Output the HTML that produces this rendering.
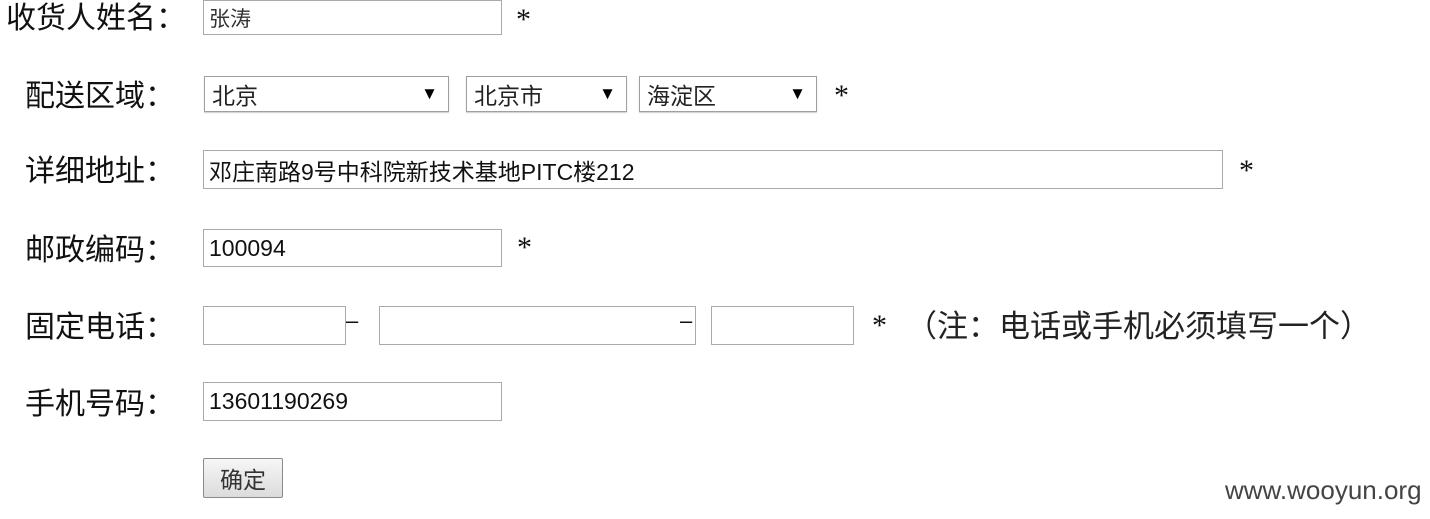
<!DOCTYPE html>
<html><head><meta charset="utf-8"><style>
body{margin:0;width:1430px;height:519px;background:#fff;position:relative;overflow:hidden;font-family:"Liberation Sans","Noto Sans CJK SC",sans-serif;color:#111}
.a{position:absolute;white-space:nowrap}
.lab{font-size:30px;line-height:36px}
.in{position:absolute;box-sizing:border-box;border:1px solid #aaa;background:#fff;font-size:23px;color:#111;padding-left:5px;display:flex;align-items:center}
.sel{position:absolute;box-sizing:border-box;border:1px solid #a0a0a0;box-shadow:0 1px 1px #ccc;background:#fff;font-size:23px;padding-left:7px;display:flex;align-items:center;color:#222}
.sel span.ar{position:absolute;right:10px;font-size:17px;color:#000}
.st{font-size:30px;line-height:36px;font-family:"Liberation Serif",serif}
</style></head><body>
<div class="a lab" style="left:6px;top:1px">收货人姓名：</div>
<div class="in" style="left:203px;top:0;width:299px;height:35px;color:#333;font-size:21px">张涛</div>
<div class="a st" style="left:516px;top:2px">*</div>

<div class="a lab" style="left:25px;top:79px">配送区域：</div>
<div class="sel" style="left:204px;top:76px;width:245px;height:36px">北京<span class="ar">▼</span></div>
<div class="sel" style="left:466px;top:76px;width:161px;height:36px">北京市<span class="ar">▼</span></div>
<div class="sel" style="left:639px;top:76px;width:178px;height:36px">海淀区<span class="ar">▼</span></div>
<div class="a st" style="left:834px;top:78px">*</div>

<div class="a lab" style="left:25px;top:154px">详细地址：</div>
<div class="in" style="left:203px;top:150px;width:1020px;height:39px">邓庄南路9号中科院新技术基地PITC楼212</div>
<div class="a st" style="left:1239px;top:153px">*</div>

<div class="a lab" style="left:25px;top:233px">邮政编码：</div>
<div class="in" style="left:203px;top:229px;width:299px;height:38px">100094</div>
<div class="a st" style="left:517px;top:230px">*</div>

<div class="a lab" style="left:25px;top:310px">固定电话：</div>
<div class="in" style="left:203px;top:306px;width:143px;height:39px"></div>
<div class="a" style="left:346px;top:306px;font-size:22px;line-height:30px">–</div>
<div class="in" style="left:379px;top:306px;width:317px;height:39px"></div>
<div class="a" style="left:680px;top:306px;font-size:22px;line-height:30px">–</div>
<div class="in" style="left:711px;top:306px;width:143px;height:39px"></div>
<div class="a st" style="left:872px;top:308px">*</div>
<div class="a" style="left:906px;top:309px;font-size:31px;line-height:36px;color:#222">（注：电话或手机必须填写一个）</div>

<div class="a lab" style="left:25px;top:387px">手机号码：</div>
<div class="in" style="left:203px;top:382px;width:299px;height:39px">13601190269</div>

<div class="a" style="left:203px;top:458px;width:80px;height:40px;box-sizing:border-box;border:1px solid #8a8a8a;border-radius:2px;background:linear-gradient(#f6f6f6,#dcdcdc);font-size:23px;color:#333;display:flex;align-items:center;justify-content:center">确定</div>

<div class="a" style="left:1225px;top:475px;font-size:26px;color:#444">www.wooyun.org</div>
</body></html>
